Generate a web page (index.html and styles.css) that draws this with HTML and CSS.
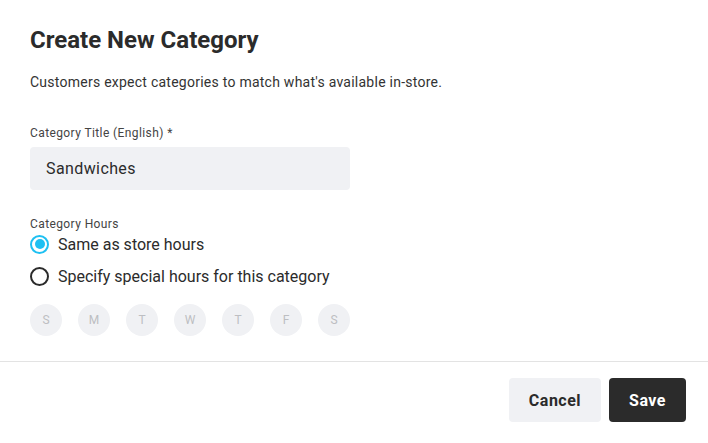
FILE: index.html
```html
<!DOCTYPE html>
<html lang="en">
  <head>
    <meta charset="UTF-8" />
    <title>Create New Category</title>
    <link rel="stylesheet" href="styles.css">
  </head>
  <body>
    <div class="modal">
      <div class="modal-body">
        <h1>Create New Category</h1>
        <p class="intro">Customers expect categories to match what's available in-store.</p>

        <!-- Title field -->
        <label class="field-label" for="title">Category Title (English) *</label>
        <input class="text-input" id="title" type="text" value="Sandwiches" />

        <!-- Hours -->
        <div class="field-label hours-label">Category Hours</div>
        <div class="radio-group">
          <label class="radio">
            <input type="radio" name="hours" checked />
            <span class="dot"></span>
            Same as store hours
          </label>
          <label class="radio">
            <input type="radio" name="hours" />
            <span class="dot"></span>
            Specify special hours for this category
          </label>
        </div>

        <div class="days">
          <span class="day">S</span>
          <span class="day">M</span>
          <span class="day">T</span>
          <span class="day">W</span>
          <span class="day">T</span>
          <span class="day">F</span>
          <span class="day">S</span>
        </div>
      </div>

      <div class="modal-footer">
        <button class="btn btn-light">Cancel</button>
        <button class="btn btn-dark">Save</button>
      </div>
    </div>
  </body>
</html>
```

FILE: styles.css
```css
body {
  margin: 0;
  font-family: Roboto, "Liberation Sans", sans-serif;
  color: #2b2b2b;
  background: #fff;
}
.modal {
  width: 708px;
}
.modal-body {
  padding: 24px 30px 0;
  display: flex;
  flex-direction: column;
  align-items: flex-start;
}
h1 {
  margin: 0;
  font-size: 24px;
  font-weight: 700;
  line-height: 32px;
  color: #2b2b2b;
}
.intro {
  margin: 16px 0 0;
  font-size: 14px;
  line-height: 20px;
  letter-spacing: 0.25px;
  color: #333;
}
.field-label {
  margin-top: 33px;
  font-size: 12px;
  line-height: 16px;
  letter-spacing: 0.4px;
  color: #444;
}
.text-input {
  margin-top: 6px;
  box-sizing: border-box;
  width: 320px;
  height: 43px;
  padding: 0 16px;
  border: none;
  border-radius: 4px;
  background-color: #f0f1f4;
  font-family: inherit;
  font-size: 16px;
  letter-spacing: 0.4px;
  color: #2b2b2b;
  outline: none;
}
.hours-label {
  margin-top: 26px;
}
.radio-group {
  display: flex;
  flex-direction: column;
  gap: 8px;
}
.radio {
  display: flex;
  align-items: center;
  gap: 9px;
  height: 24px;
  font-size: 16px;
  color: #2b2b2b;
  cursor: pointer;
}
.radio input {
  display: none;
}
.dot {
  box-sizing: border-box;
  width: 19px;
  height: 19px;
  border: 2px solid #2b2b2b;
  border-radius: 50%;
  display: flex;
  align-items: center;
  justify-content: center;
}
.radio input:checked + .dot {
  border-color: #1ec0f2;
}
.radio input:checked + .dot::after {
  content: "";
  width: 10px;
  height: 10px;
  border-radius: 50%;
  background: #1ec0f2;
}
.days {
  margin-top: 16px;
  display: flex;
  gap: 16px;
}
.day {
  width: 32px;
  height: 32px;
  border-radius: 50%;
  background-color: #f0f1f4;
  color: #bdbec2;
  font-size: 12px;
  display: flex;
  align-items: center;
  justify-content: center;
}
.modal-footer {
  margin-top: 25px;
  border-top: 1px solid #e3e3e3;
  padding: 16px 22px 0;
  display: flex;
  justify-content: flex-end;
  gap: 8px;
}
.btn {
  height: 44px;
  padding: 0 20px;
  border: none;
  border-radius: 4px;
  font-family: inherit;
  font-size: 16px;
  font-weight: 700;
  letter-spacing: 0.5px;
  cursor: pointer;
}
.btn-light {
  background-color: #f0f1f4;
  color: #2b2b2b;
}
.btn-dark {
  background-color: #2b2b2b;
  color: #fff;
}
```
